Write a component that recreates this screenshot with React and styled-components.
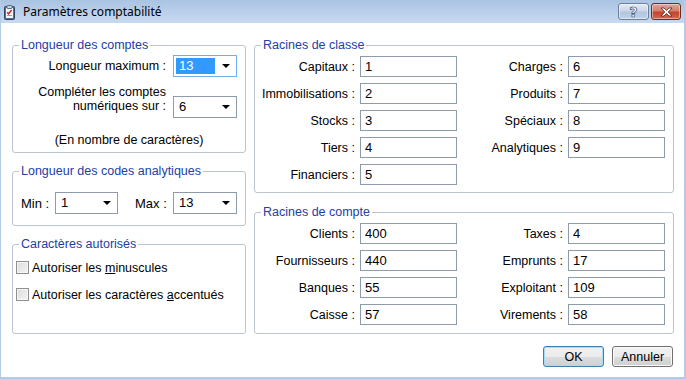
import React from "react";
import styled, { createGlobalStyle } from "styled-components";

const GlobalStyle = createGlobalStyle`
  html, body {
    margin: 0;
    padding: 0;
    background: #ffffff;
  }
  body {
    font-family: "Liberation Sans", Arial, sans-serif;
    font-size: 12.5px;
    color: #000;
  }
`;

const classRoots = [
  ["Capitaux", "1", "Charges", "6"],
  ["Immobilisations", "2", "Produits", "7"],
  ["Stocks", "3", "Spéciaux", "8"],
  ["Tiers", "4", "Analytiques", "9"],
  ["Financiers", "5"],
];

const accountRoots = [
  ["Clients", "400", "Taxes", "4"],
  ["Fournisseurs", "440", "Emprunts", "17"],
  ["Banques", "55", "Exploitant", "109"],
  ["Caisse", "57", "Virements", "58"],
];

export default function App() {
  return (
    <>
      <GlobalStyle />
      <Window>
        <TitleBar>
          <TitleIcon width="11" height="15" viewBox="0 0 11 15">
            <rect x="0.5" y="1.5" width="10" height="13" rx="1" fill="#4f6f94" stroke="#2e4763" />
            <rect x="2" y="3" width="7" height="10" fill="#f4f7fb" />
            <rect x="3" y="0.5" width="5" height="3" rx="0.5" fill="#c9d4e0" stroke="#5a6e86" />
            <path d="M3.2 7.2 L4.6 8.8 L7.6 5" fill="none" stroke="#d02020" strokeWidth="1.4" />
            <rect x="3" y="10" width="5" height="1" fill="#8aa0b8" />
          </TitleIcon>
          <TitleText>Paramètres comptabilité</TitleText>
          <CaptionButtons>
            <CaptionButton>
              <HelpGlyph>?</HelpGlyph>
            </CaptionButton>
            <CaptionButton $close>
              <svg width="13" height="10" viewBox="0 0 13 10">
                <path
                  d="M1 1 L4 1 L6.5 3.5 L9 1 L12 1 L8.2 5 L12 9 L9 9 L6.5 6.5 L4 9 L1 9 L4.8 5 Z"
                  fill="#ffffff"
                  stroke="#5a2218"
                  strokeWidth="0.8"
                  strokeLinejoin="round"
                />
              </svg>
            </CaptionButton>
          </CaptionButtons>
        </TitleBar>

        <Content>
          <Columns>
            <LeftColumn>
              <Group>
                <Legend>Longueur des comptes</Legend>
                <AccountsBody>
                  <FormRow>
                    <RowLabel>Longueur maximum :</RowLabel>
                    <Select $focused>
                      <SelectValue $selected>13</SelectValue>
                      <Arrow />
                    </Select>
                  </FormRow>
                  <FormRow $end>
                    <RowLabel $twoLines>
                      Compléter les comptes
                      <br />
                      numériques sur :
                    </RowLabel>
                    <Select>
                      <SelectValue>6</SelectValue>
                      <Arrow />
                    </Select>
                  </FormRow>
                  <Note>(En nombre de caractères)</Note>
                </AccountsBody>
              </Group>

              <Group>
                <Legend>Longueur des codes analytiques</Legend>
                <AnalyticBody>
                  <ShortLabel $w={34}>Min :</ShortLabel>
                  <Select $w={63}>
                    <SelectValue>1</SelectValue>
                    <Arrow />
                  </Select>
                  <ShortLabel $w={38} $ml={17}>
                    Max :
                  </ShortLabel>
                  <Select>
                    <SelectValue>13</SelectValue>
                    <Arrow />
                  </Select>
                </AnalyticBody>
              </Group>

              <Group $grow>
                <Legend>Caractères autorisés</Legend>
                <ChecksBody>
                  <CheckRow>
                    <CheckBox />
                    <span>
                      Autoriser les <u>m</u>inuscules
                    </span>
                  </CheckRow>
                  <CheckRow>
                    <CheckBox />
                    <span>
                      Autoriser les caractères <u>a</u>ccentués
                    </span>
                  </CheckRow>
                </ChecksBody>
              </Group>
            </LeftColumn>

            <RightColumn>
              <Group>
                <Legend>Racines de classe</Legend>
                <RootsGrid $bottom={7}>
                  {classRoots.map((r) => (
                    <React.Fragment key={r[0]}>
                      <FieldLabel>{r[0]} :</FieldLabel>
                      <TextBox>{r[1]}</TextBox>
                      {r[2] ? <FieldLabel>{r[2]} :</FieldLabel> : <span />}
                      {r[2] ? <TextBox>{r[3]}</TextBox> : <span />}
                    </React.Fragment>
                  ))}
                </RootsGrid>
              </Group>

              <Group>
                <Legend>Racines de compte</Legend>
                <RootsGrid $bottom={8}>
                  {accountRoots.map((r) => (
                    <React.Fragment key={r[0]}>
                      <FieldLabel>{r[0]} :</FieldLabel>
                      <TextBox>{r[1]}</TextBox>
                      <FieldLabel>{r[2]} :</FieldLabel>
                      <TextBox>{r[3]}</TextBox>
                    </React.Fragment>
                  ))}
                </RootsGrid>
              </Group>
            </RightColumn>
          </Columns>

          <Footer>
            <PushButton $default>OK</PushButton>
            <PushButton>Annuler</PushButton>
          </Footer>
        </Content>
      </Window>
    </>
  );
}

const Window = styled.div`
  box-sizing: border-box;
  width: 686px;
  height: 379px;
  display: flex;
  flex-direction: column;
  background: #ffffff;
  border-left: 1px solid #b3cbe8;
  border-right: 2px solid #b3cbe8;
  border-bottom: 2px solid #b3cbe8;
  overflow: hidden;
`;

const TitleBar = styled.div`
  height: 23px;
  flex: none;
  display: flex;
  align-items: center;
  margin: 0 -2px 0 -1px;
  padding: 0 5px 0 4px;
  background: linear-gradient(to bottom, #a9c3e2 0%, #b9cfea 50%, #c8daef 100%);
`;

const TitleIcon = styled.svg`
  display: block;
  flex: none;
  margin-top: 1px;
`;

const TitleText = styled.div`
  flex: 1;
  margin-left: 8px;
  font-family: "Noto Sans", "Liberation Sans", sans-serif;
  font-size: 12px;
  color: #000;
`;

const CaptionButtons = styled.div`
  display: flex;
  gap: 2px;
  align-self: flex-start;
  margin-top: 3px;
`;

const CaptionButton = styled.div`
  box-sizing: border-box;
  width: ${(p) => (p.$close ? 30 : 31)}px;
  height: 17px;
  display: flex;
  align-items: center;
  justify-content: center;
  border-radius: 3px;
  border: 1px solid ${(p) => (p.$close ? "#6d2a1f" : "#6c7f99")};
  background: ${(p) =>
    p.$close
      ? "linear-gradient(to bottom, #e3a295 0%, #d6806d 45%, #c4432b 55%, #cf6a50 100%)"
      : "linear-gradient(to bottom, #e2ebf5 0%, #c9d7e8 45%, #b2c5dd 55%, #c3d3e6 100%)"};
  box-shadow: inset 0 0 0 1px rgba(255, 255, 255, 0.45);
`;

const HelpGlyph = styled.span`
  font-family: "DejaVu Sans", sans-serif;
  font-weight: bold;
  font-size: 14px;
  line-height: 14px;
  color: #ffffff;
  -webkit-text-stroke: 0.7px #3c4a5c;
`;

const Content = styled.div`
  flex: 1;
  display: flex;
  flex-direction: column;
  padding: 15px 10px 0 11px;
`;

const Columns = styled.div`
  display: flex;
  gap: 8px;
`;

const LeftColumn = styled.div`
  width: 234px;
  display: flex;
  flex-direction: column;
  gap: 11px;
`;

const RightColumn = styled.div`
  width: 420px;
  display: flex;
  flex-direction: column;
  gap: 12px;
`;

const Group = styled.fieldset`
  margin: 0;
  padding: 0;
  min-width: 0;
  border: 1px solid #bcc4ce;
  border-radius: 3px;
  flex: ${(p) => (p.$grow ? 1 : "none")};
`;

const Legend = styled.legend`
  margin-left: 6px;
  padding: 0 2px;
  font-size: 12.5px;
  line-height: 14px;
  color: #2240a8;
`;

const AccountsBody = styled.div`
  display: flex;
  flex-direction: column;
  padding: 3px 0 5px 0;
`;

const FormRow = styled.div`
  display: flex;
  align-items: ${(p) => (p.$end ? "flex-end" : "center")};
  gap: 7px;
  margin-top: ${(p) => (p.$end ? 8 : 0)}px;
`;

const RowLabel = styled.div`
  width: 153px;
  text-align: right;
  line-height: 14px;
  margin-bottom: ${(p) => (p.$twoLines ? 5 : 0)}px;
`;

const Note = styled.div`
  text-align: center;
  line-height: 14px;
  margin-top: 15px;
`;

const Select = styled.div`
  box-sizing: border-box;
  width: ${(p) => p.$w || 64}px;
  height: 22px;
  display: flex;
  align-items: center;
  padding: 2px;
  border: 1px solid ${(p) => (p.$focused ? "#6fb0ec" : "#8e9bab")};
  background: #ffffff;
`;

const SelectValue = styled.div`
  flex: 1;
  height: 16px;
  line-height: 16px;
  padding-left: 3px;
  margin-right: 7px;
  font-size: 13px;
  background: ${(p) => (p.$selected ? "#3399ff" : "transparent")};
  color: ${(p) => (p.$selected ? "#ffffff" : "#000000")};
`;

const Arrow = styled.div`
  width: 0;
  height: 0;
  margin-right: 4px;
  border-left: 4px solid transparent;
  border-right: 4px solid transparent;
  border-top: 4px solid #000;
`;

const AnalyticBody = styled.div`
  display: flex;
  align-items: center;
  padding: 14px 0 11px 8px;
`;

const ShortLabel = styled.div`
  width: ${(p) => p.$w}px;
  margin-left: ${(p) => p.$ml || 0}px;
  font-size: 13px;
`;

const ChecksBody = styled.div`
  display: flex;
  flex-direction: column;
  gap: 14px;
  padding: 10px 0 0 3px;
`;

const CheckRow = styled.div`
  display: flex;
  align-items: center;
  gap: 3px;
  height: 13px;
`;

const CheckBox = styled.div`
  box-sizing: border-box;
  width: 13px;
  height: 13px;
  flex: none;
  border: 1px solid #8f8f8f;
  background: linear-gradient(135deg, #dcdcdc 0%, #f4f4f4 100%);
  box-shadow: inset 0 0 0 1px #f6f6f6;
`;

const RootsGrid = styled.div`
  display: grid;
  grid-template-columns: 100px 97px 1fr 97px;
  grid-auto-rows: 21px;
  column-gap: 5px;
  row-gap: 6px;
  padding: 4px 8px ${(p) => p.$bottom}px 0;
`;

const FieldLabel = styled.div`
  text-align: right;
  align-self: center;
  white-space: nowrap;
`;

const TextBox = styled.div`
  box-sizing: border-box;
  height: 21px;
  padding-left: 4px;
  line-height: 19px;
  font-size: 13px;
  border: 1px solid #8e9bab;
  background: #ffffff;
`;

const Footer = styled.div`
  display: flex;
  justify-content: flex-end;
  gap: 8px;
  padding-top: 12px;
  padding-right: 1px;
`;

const PushButton = styled.div`
  box-sizing: border-box;
  width: 61px;
  height: 21px;
  display: flex;
  align-items: center;
  justify-content: center;
  border-radius: 3px;
  font-size: 12.5px;
  border: 1px solid ${(p) => (p.$default ? "#3c7fb1" : "#707070")};
  background: linear-gradient(to bottom, #f2f2f2 0%, #ebebeb 50%, #dddddd 51%, #cfcfcf 100%);
  box-shadow: inset 0 0 0 1px ${(p) => (p.$default ? "#a8dcf8" : "#fbfbfb")};
`;
